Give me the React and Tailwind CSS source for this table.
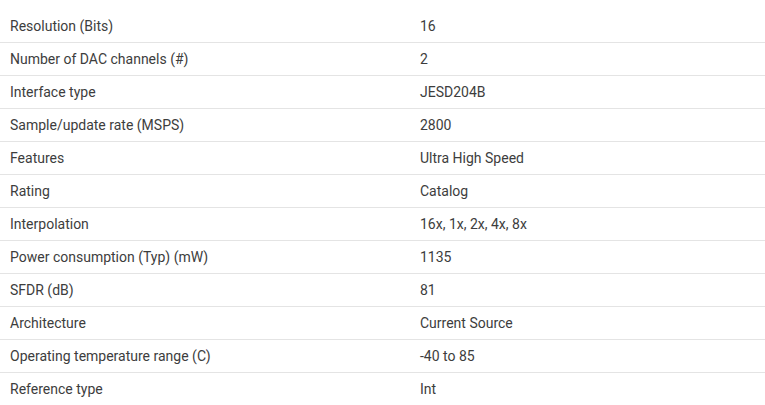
export default function App() {
  const rows = [
    ["Resolution (Bits)", "16"],
    ["Number of DAC channels (#)", "2"],
    ["Interface type", "JESD204B"],
    ["Sample/update rate (MSPS)", "2800"],
    ["Features", "Ultra High Speed"],
    ["Rating", "Catalog"],
    ["Interpolation", "16x, 1x, 2x, 4x, 8x"],
    ["Power consumption (Typ) (mW)", "1135"],
    ["SFDR (dB)", "81"],
    ["Architecture", "Current Source"],
    ["Operating temperature range (C)", "-40 to 85"],
    ["Reference type", "Int"],
  ];
  return (
    <div className="w-[765px] h-[405px] overflow-hidden bg-white pt-[10px] text-[14px] text-[#3d3d3d]" style={{ fontFamily: "Roboto, 'Liberation Sans', sans-serif" }}>
      {rows.map(([k, v]) => (
        <div key={k} className="flex h-[33px] items-center border-b border-[#e4e4e4]">
          <div className="w-[420px] pl-[10px]">{k}</div>
          <div>{v}</div>
        </div>
      ))}
    </div>
  );
}
